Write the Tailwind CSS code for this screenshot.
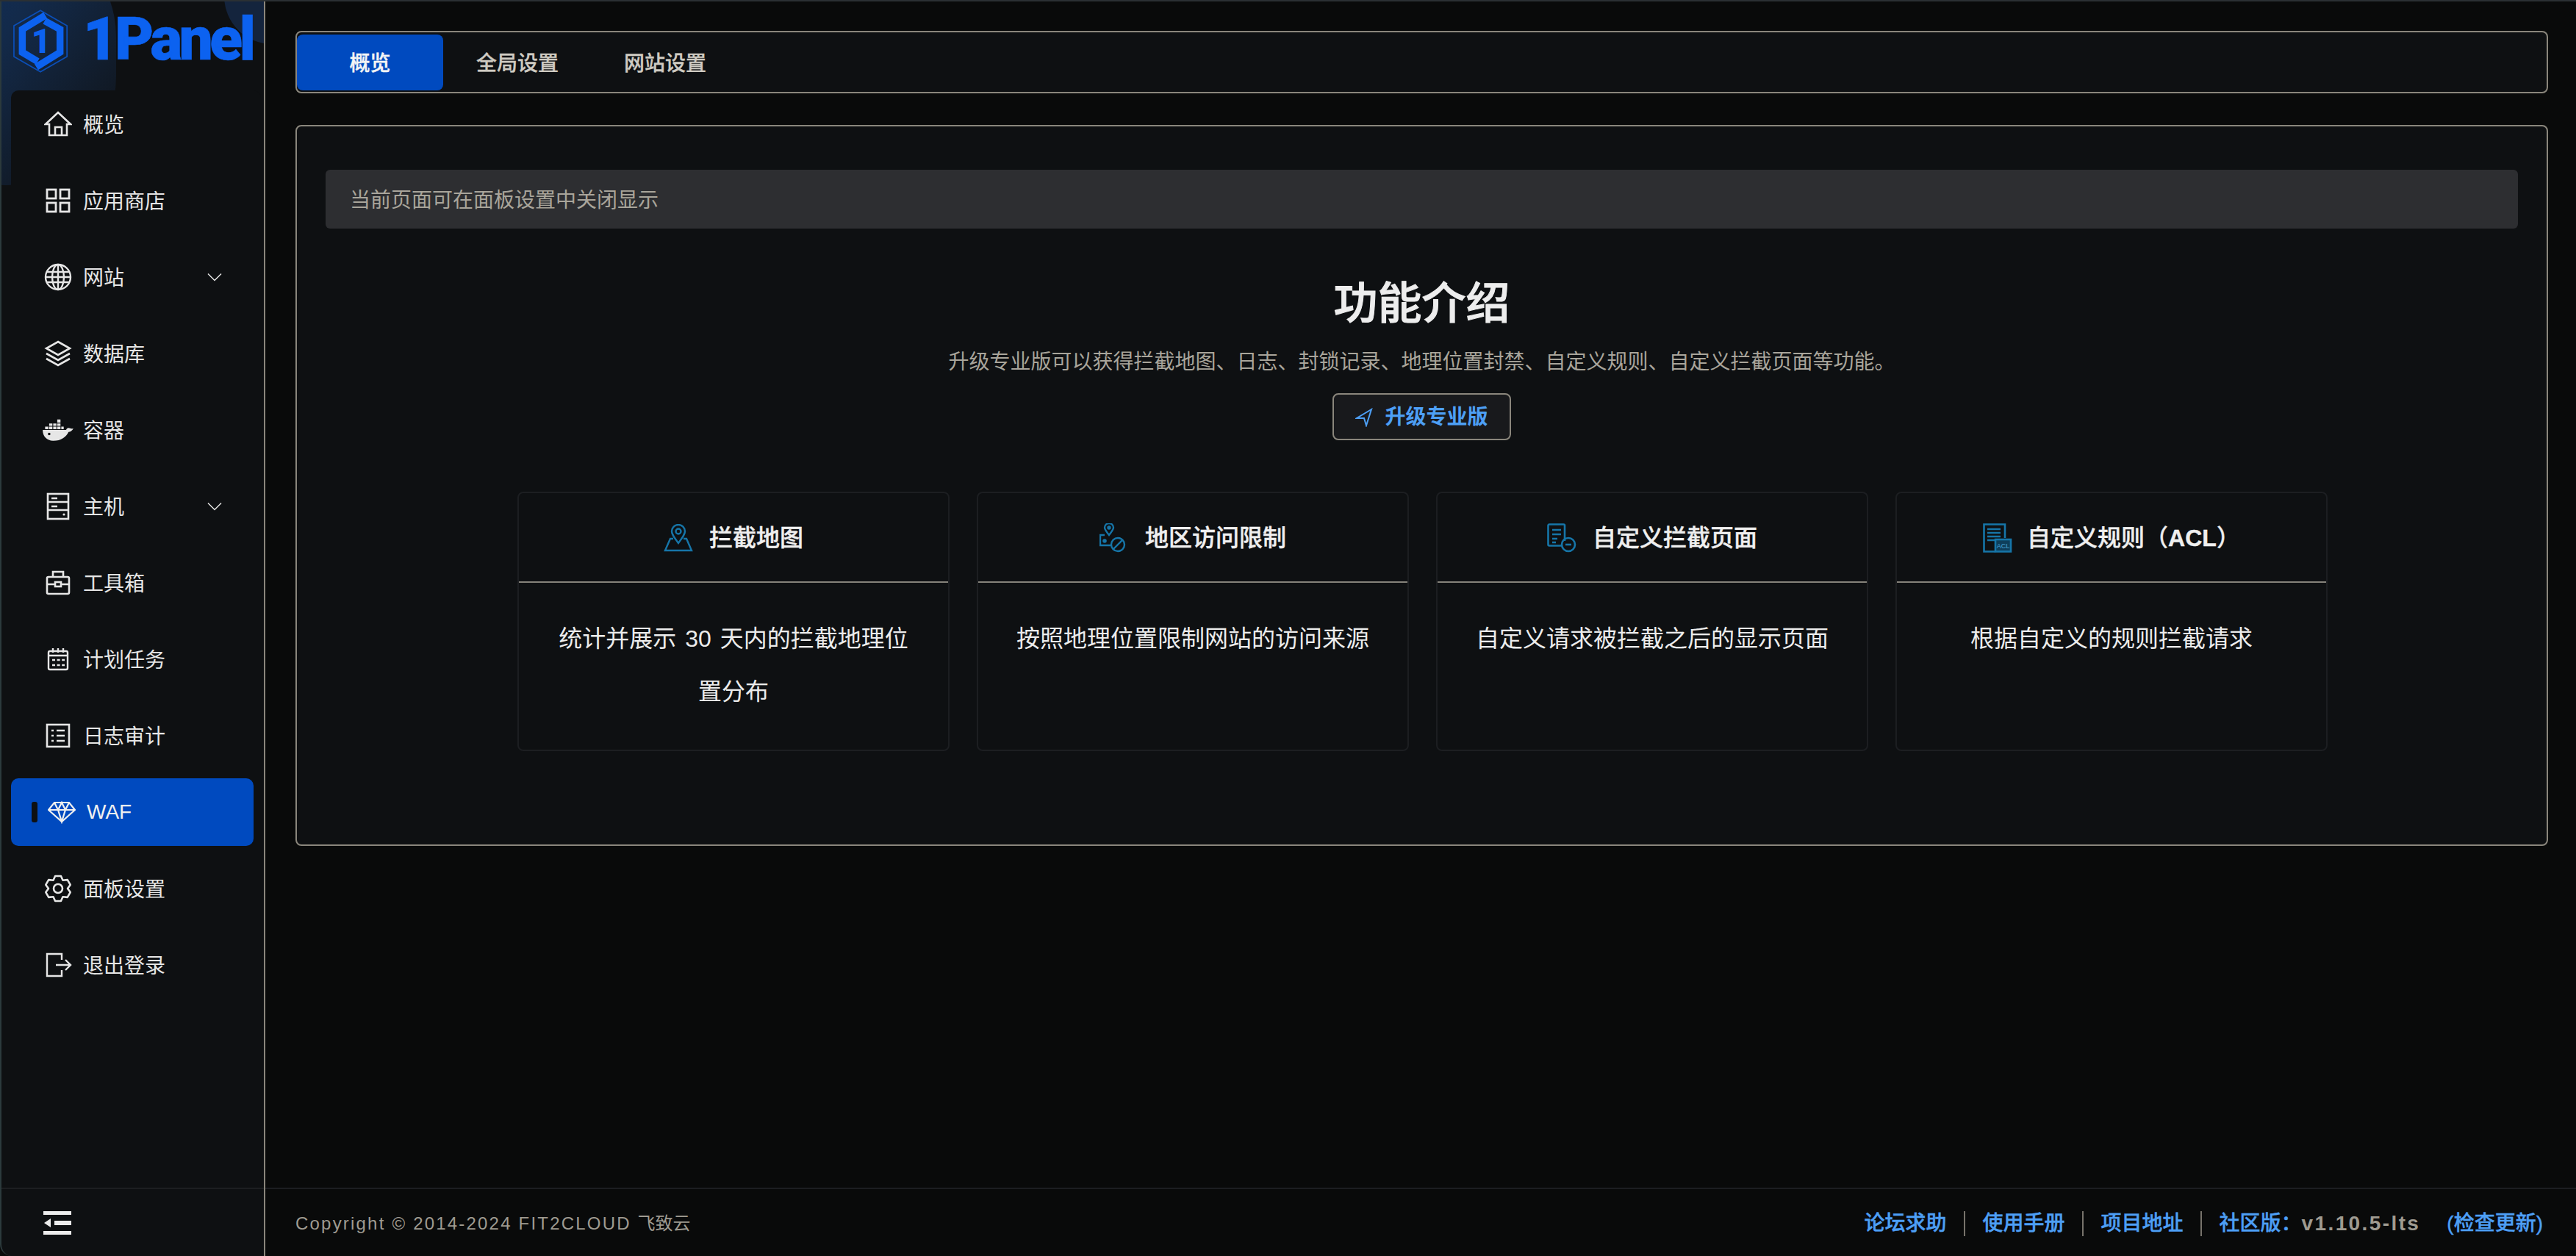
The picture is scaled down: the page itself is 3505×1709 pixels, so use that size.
<!doctype html>
<html lang="zh-CN">
<head>
<meta charset="utf-8">
<title>1Panel WAF</title>
<script src="https://cdn.jsdelivr.net/npm/@tailwindcss/browser@4"></script>
</head>
<body class="m-0 bg-[#090a0a] font-['Liberation_Sans','Noto_Sans_CJK_SC',sans-serif]">
<div class="flex h-[1709px] w-[3505px] overflow-hidden border-t-2 border-t-[#2b3033] bg-[#090a0a]">

  <!-- sidebar -->
  <aside class="relative flex h-full w-[361px] shrink-0 flex-col overflow-hidden rounded-bl-[16px] border-r-2 border-l-2 border-r-[#8a867c] border-l-[#2c3a3c] bg-[#0e1012]">
    <div class="absolute -top-[100px] -left-[140px] h-[350px] w-[296px] rounded-full bg-linear-to-br from-[#0b3068] via-[#132a4a] via-45% to-[#0e1012]"></div>
    <div class="absolute -top-[72px] left-[303px] h-[130px] w-[130px] rounded-full bg-[#14243d]"></div>

    <div class="relative flex h-[121px] shrink-0 items-start">
      <svg class="mt-[10px] ml-[16px] h-[88px] w-[76px] shrink-0" viewBox="0 0 80 92" fill="none">
        <polygon points="39,2 77,24 77,68 39,90 1,68 1,24" stroke="#0b4fb8" stroke-width="1.8"/>
        <polyline points="46,9 13,29 13,62 35,75" stroke="#0c62f0" stroke-width="10"/>
        <polyline points="45,17 67,29 67,62 33,83" stroke="#0c62f0" stroke-width="10"/>
        <text x="40" y="63" text-anchor="middle" font-family="Roboto" font-weight="900" font-size="48" fill="#0c62f0">1</text>
      </svg>
      <span class="mt-[6px] ml-[19px] font-['Roboto'] text-[82px] leading-[90px] font-black tracking-[-4.5px] text-[#0c62f0] [-webkit-text-stroke:0.6px_#0c62f0]">1Panel</span>
    </div>

    <nav class="relative mr-[4px] ml-[13px] flex flex-1 flex-col rounded-t-[10px] bg-[#0e1012] text-[28px] text-[#e6e6e6]">
      <a class="mb-[12px] flex h-[92px] w-[330px] items-center pl-[45px]">
        <svg class="mr-[15px] h-[38px] w-[38px] shrink-0" viewBox="0 0 38 38" fill="none" stroke="currentColor" stroke-width="2.6"><path d="M2 19 19 3l17 16h-5v15H7V19H2Z"/><path d="M15 34V23h9v11"/></svg>
        <span class="pt-[4px]">概览</span>
      </a>
      <a class="mb-[12px] flex h-[92px] w-[330px] items-center pl-[45px]">
        <svg class="mr-[15px] h-[38px] w-[38px] shrink-0" viewBox="0 0 38 38" fill="none" stroke="currentColor" stroke-width="2.8"><rect x="4" y="4" width="12" height="12"/><rect x="22" y="4" width="12" height="12"/><rect x="4" y="22" width="12" height="12"/><rect x="22" y="22" width="12" height="12"/></svg>
        <span class="pt-[4px]">应用商店</span>
      </a>
      <a class="mb-[12px] flex h-[92px] w-[330px] items-center pl-[45px]">
        <svg class="mr-[15px] h-[38px] w-[38px] shrink-0" viewBox="0 0 38 38" fill="none" stroke="currentColor" stroke-width="2.4"><circle cx="19" cy="19" r="17"/><ellipse cx="19" cy="19" rx="8" ry="17"/><path d="M19 2v34M3 12h32M3 26h32M2 19h34"/></svg>
        <span class="pt-[4px]">网站</span>
        <svg class="mr-[43px] ml-auto h-[12px] w-[20px]" viewBox="0 0 20 12" fill="none" stroke="currentColor" stroke-width="1.5"><path d="m1 1.5 9 9 9-9"/></svg>
      </a>
      <a class="mb-[12px] flex h-[92px] w-[330px] items-center pl-[45px]">
        <svg class="mr-[15px] h-[38px] w-[38px] shrink-0" viewBox="0 0 38 38" fill="none" stroke="currentColor" stroke-width="2.6"><path d="M19 3 35 12 19 21 3 12 19 3Z"/><path d="M3 19l16 9 16-9"/><path d="M3 26l16 9 16-9"/></svg>
        <span class="pt-[4px]">数据库</span>
      </a>
      <a class="mb-[12px] flex h-[92px] w-[330px] items-center pl-[45px]">
        <svg class="mr-[15px] h-[38px] w-[38px] shrink-0 scale-110" viewBox="0 0 38 30" fill="currentColor"><path d="M0 15h29c1-3 3-3 5-2 1 .5 2 .5 4 .5-2 3-4 4-6 4-3 6-9 11-19 11C5 28 0 23 0 15Z"/><path d="M3 11h4v3H3zM8 11h4v3H8zM13 11h4v3h-4zM18 11h4v3h-4zM23 11h3v3h-3zM8 7h4v3H8zM13 7h4v3h-4zM18 7h4v3h-4zM18 2h4v4h-4z"/><circle cx="8" cy="20" r="1.6" fill="#0e1012"/></svg>
        <span class="pt-[4px]">容器</span>
      </a>
      <a class="mb-[12px] flex h-[92px] w-[330px] items-center pl-[45px]">
        <svg class="mr-[15px] h-[38px] w-[38px] shrink-0" viewBox="0 0 38 38" fill="none" stroke="currentColor" stroke-width="2.6"><rect x="5" y="2" width="28" height="34"/><path d="M5 13h28M5 24h28M10 8h8M10 19h8"/><circle cx="27" cy="30" r="1.6" fill="currentColor" stroke="none"/></svg>
        <span class="pt-[4px]">主机</span>
        <svg class="mr-[43px] ml-auto h-[12px] w-[20px]" viewBox="0 0 20 12" fill="none" stroke="currentColor" stroke-width="1.5"><path d="m1 1.5 9 9 9-9"/></svg>
      </a>
      <a class="mb-[12px] flex h-[92px] w-[330px] items-center pl-[45px]">
        <svg class="mr-[15px] h-[38px] w-[38px] shrink-0" viewBox="0 0 38 38" fill="none" stroke="currentColor" stroke-width="2.6"><rect x="4" y="11" width="30" height="23" rx="2"/><path d="M12 11V4h14v7M4 21h11M23 21h11"/><rect x="15" y="18" width="8" height="6"/></svg>
        <span class="pt-[4px]">工具箱</span>
      </a>
      <a class="mb-[12px] flex h-[92px] w-[330px] items-center pl-[45px]">
        <svg class="mr-[15px] h-[38px] w-[38px] shrink-0" viewBox="0 0 38 38" fill="none" stroke="currentColor" stroke-width="2.4"><rect x="6" y="8" width="26" height="25" rx="2"/><path d="M12 4v6M19 4v6M26 4v6M6 14h26"/><path stroke-dasharray="4 2.6" d="M11 20h17M11 27h17"/></svg>
        <span class="pt-[4px]">计划任务</span>
      </a>
      <a class="mb-[12px] flex h-[92px] w-[330px] items-center pl-[45px]">
        <svg class="mr-[15px] h-[38px] w-[38px] shrink-0" viewBox="0 0 38 38" fill="none" stroke="currentColor" stroke-width="2.6"><rect x="4" y="4" width="30" height="30"/><path d="M10 12h3M17 12h11M10 19h3M17 19h11M10 26h3M17 26h11"/></svg>
        <span class="pt-[4px]">日志审计</span>
      </a>
      <a class="relative mb-[12px] flex h-[92px] w-[330px] items-center rounded-[10px] bg-[#004abf] pl-[28px] text-[#f0f0f0]">
        <span class="mr-[14px] h-[28px] w-[8px] rounded-[3px] bg-[#0e1012]"></span>
        <svg class="mr-[15px] h-[32px] w-[38px] shrink-0" viewBox="0 0 38 30" fill="none" stroke="currentColor" stroke-width="2.2"><path d="M9 2h20l8 10-18 16L1 12 9 2Z"/><path d="M1 12h36M9 2l5 10 5 16 5-16 5-10M14 12l5-10 5 10"/></svg>
        <span>WAF</span>
      </a>
      <a class="mb-[12px] flex h-[92px] w-[330px] items-center pl-[45px]">
        <svg class="mr-[15px] h-[38px] w-[38px] shrink-0" viewBox="0 0 38 38" fill="none" stroke="currentColor" stroke-width="2.6" stroke-linejoin="round"><path d="M15.1 2H22.900L25.500 7.700 31.800 7.100 35.700 13.900 32 19 35.700 24.100 31.800 30.900 25.500 30.300 22.900 36H15.100L12.500 30.300 6.200 30.900 2.300 24.100 6 19 2.300 13.900 6.200 7.100 12.500 7.700Z"/><circle cx="19" cy="19" r="6"/></svg>
        <span class="pt-[4px]">面板设置</span>
      </a>
      <a class="mb-[12px] flex h-[92px] w-[330px] items-center pl-[45px]">
        <svg class="mr-[15px] h-[38px] w-[38px] shrink-0" viewBox="0 0 38 38" fill="none" stroke="currentColor" stroke-width="2.4"><path d="M24 12V4H4v30h20v-8"/><path d="M16 19h20M29 12l7 7-7 7"/></svg>
        <span class="pt-[4px]">退出登录</span>
      </a>
    </nav>

    <div class="relative flex h-[93px] shrink-0 items-center border-t-2 border-t-[#1c1e21] pl-[57px]">
      <svg class="h-[32px] w-[38px]" viewBox="0 0 38 32" fill="#ececec"><path d="M0 0h38v5H0zM15 13h23v6H15zM0 27h38v5H0zM10 10v12L1 16l9-6Z"/></svg>
    </div>
  </aside>

  <!-- main -->
  <div class="flex h-full min-w-0 flex-1 flex-col">
    <main class="flex flex-1 flex-col pt-[40px] pr-[38px] pl-[41px]">
      <div class="flex h-[85px] items-center rounded-[8px] border-2 border-[#8a867c] bg-[#0e1012]">
        <div class="flex h-[76px] w-[199px] items-center justify-center rounded-[8px] bg-[#004abf] pt-[4px] text-[28px] font-medium text-[#f5f5f5] [-webkit-text-stroke:0.4px_#f5f5f5]">概览</div>
        <div class="ml-[45px] pt-[4px] text-[28px] font-medium text-[#cfcbc2] [-webkit-text-stroke:0.3px_#cfcbc2]">全局设置</div>
        <div class="ml-[89px] pt-[4px] text-[28px] font-medium text-[#cfcbc2] [-webkit-text-stroke:0.3px_#cfcbc2]">网站设置</div>
      </div>

      <section class="mt-[43px] flex h-[981px] flex-col items-center rounded-[8px] border-2 border-[#8a867c] bg-[#0e1012] px-[39px] pt-[59px]">
        <div class="flex h-[80px] w-full shrink-0 items-center rounded-[6px] bg-[#2d2e31] pt-[4px] pl-[33px] text-[28px] text-[#a9a59b]">当前页面可在面板设置中关闭显示</div>

        <h1 class="mt-[65px] text-[60px] leading-[76px] font-medium text-[#ededed] [-webkit-text-stroke:1px_#ededed]">功能介绍</h1>
        <p class="mt-[21px] text-[28px] leading-[40px] text-[#a9a59b]">升级专业版可以获得拦截地图、日志、封锁记录、地理位置封禁、自定义规则、自定义拦截页面等功能。</p>
        <button class="mt-[22px] flex h-[64px] w-[243px] items-center justify-center rounded-[8px] border-2 border-[#8a867c] bg-[#18191c] pt-[2px] text-[28px] font-bold text-[#4d9ff5]">
          <svg class="mr-[16px] h-[26px] w-[24px]" viewBox="0 0 24 26" fill="none" stroke="currentColor" stroke-width="2"><path d="M22 2 2 14h10l3 10L22 2Z"/></svg>
          升级专业版
        </button>

        <div class="mt-[70px] ml-[2px] flex gap-[37px]">
          <article class="flex h-[353px] w-[588px] flex-col rounded-[8px] border-2 border-[#1c1e21]">
            <header class="flex h-[122px] shrink-0 items-center justify-center border-b-2 border-b-[#85827a] pt-[2px] text-[32px] font-medium text-[#efefef] [-webkit-text-stroke:0.4px_#efefef]">
              <svg class="mr-[22px] h-[38px] w-[40px]" viewBox="0 0 40 38" fill="none" stroke="#1675a8" stroke-width="2.400"><path d="M20 26C14 18 11 14 11 10a9 9 0 0 1 18 0c0 4-3 8-9 16Z"/><circle cx="20" cy="10" r="3.500"/><path d="M13 20h-4L2 36h36l-7-16h-4"/></svg>
              拦截地图
            </header>
            <p class="px-[48px] pt-[40px] text-center text-[32px] leading-[72px] text-[#ececec] [word-spacing:3px]">统计并展示 30 天内的拦截地理位置分布</p>
          </article>
          <article class="flex h-[353px] w-[588px] flex-col rounded-[8px] border-2 border-[#1c1e21]">
            <header class="flex h-[122px] shrink-0 items-center justify-center border-b-2 border-b-[#85827a] pt-[2px] text-[32px] font-medium text-[#efefef] [-webkit-text-stroke:0.4px_#efefef]">
              <svg class="mr-[26px] h-[40px] w-[36px]" viewBox="0 0 36 40" fill="none" stroke="#1675a8" stroke-width="2.400"><path d="M13 16C9 11 7 8 7 6a6 6 0 0 1 12 0c0 2-2 5-6 10Z"/><circle cx="13" cy="6" r="1.500" fill="#1675a8"/><path d="M7 16H1v14h14"/><circle cx="25" cy="29" r="9"/><path d="m19 35 12-12"/><circle cx="7" cy="24" r="1.600" fill="#1675a8"/></svg>
              地区访问限制
            </header>
            <p class="px-[48px] pt-[40px] text-center text-[32px] leading-[72px] text-[#ececec]">按照地理位置限制网站的访问来源</p>
          </article>
          <article class="flex h-[353px] w-[588px] flex-col rounded-[8px] border-2 border-[#1c1e21]">
            <header class="flex h-[122px] shrink-0 items-center justify-center border-b-2 border-b-[#85827a] pt-[2px] text-[32px] font-medium text-[#efefef] [-webkit-text-stroke:0.4px_#efefef]">
              <svg class="mr-[22px] h-[40px] w-[40px]" viewBox="0 0 40 40" fill="none" stroke="#1675a8" stroke-width="2.600"><path d="M24 24V3a1.500 1.500 0 0 0-1.500-1.500H3A1.500 1.500 0 0 0 1.500 3v26A1.500 1.500 0 0 0 3 30.500h17"/><path d="M7 9h12M7 15h12M7 21h7M7 26h5"/><circle cx="29" cy="29" r="9"/><path d="M25 29h8"/></svg>
              自定义拦截页面
            </header>
            <p class="px-[48px] pt-[40px] text-center text-[32px] leading-[72px] text-[#ececec]">自定义请求被拦截之后的显示页面</p>
          </article>
          <article class="flex h-[353px] w-[588px] flex-col rounded-[8px] border-2 border-[#1c1e21]">
            <header class="flex h-[122px] shrink-0 items-center justify-center border-b-2 border-b-[#85827a] pt-[2px] text-[32px] font-medium text-[#efefef] [-webkit-text-stroke:0.4px_#efefef]">
              <svg class="mr-[20px] h-[40px] w-[40px]" viewBox="0 0 40 40" fill="none" stroke="#1675a8" stroke-width="2.600"><path d="M30 20V1.500H1.500v37H17"/><path d="M6 8h18M6 13h18M6 18h18M6 23h10"/><rect x="17" y="22" width="21" height="16.500" fill="#0e3f5c"/><text x="27.500" y="34" text-anchor="middle" font-family="Liberation Sans" font-size="9" fill="#4aa5d8" stroke="none">ACL</text></svg>
              <span>自定义规则（<span class="font-bold">ACL</span>）</span>
            </header>
            <p class="px-[48px] pt-[40px] text-center text-[32px] leading-[72px] text-[#ececec]">根据自定义的规则拦截请求</p>
          </article>
        </div>
      </section>
    </main>

    <footer class="flex h-[93px] shrink-0 items-center border-t-2 border-t-[#1c1e21] pt-[3px] pr-[45px] pl-[41px]">
      <span class="text-[24px] text-[#9f9b91]"><span class="tracking-[2.2px]">Copyright © 2014-2024 FIT2CLOUD </span>飞致云</span>
      <div class="ml-auto flex items-center text-[28px] font-medium text-[#4d9ff5] [-webkit-text-stroke:0.4px_#4d9ff5]">
        <a>论坛求助</a><span class="mx-[23.5px] h-[34px] w-[2px] bg-[#77736b]"></span>
        <a>使用手册</a><span class="mx-[23.5px] h-[34px] w-[2px] bg-[#77736b]"></span>
        <a>项目地址</a><span class="mx-[23.5px] h-[34px] w-[2px] bg-[#77736b]"></span>
        <a>社区版：</a>
        <span class="font-bold tracking-[2.4px] text-[#9f9b91] [-webkit-text-stroke:0]">v1.10.5-lts</span>
        <a class="ml-[36px]">(检查更新)</a>
      </div>
    </footer>
  </div>
</div>
</body>
</html>
